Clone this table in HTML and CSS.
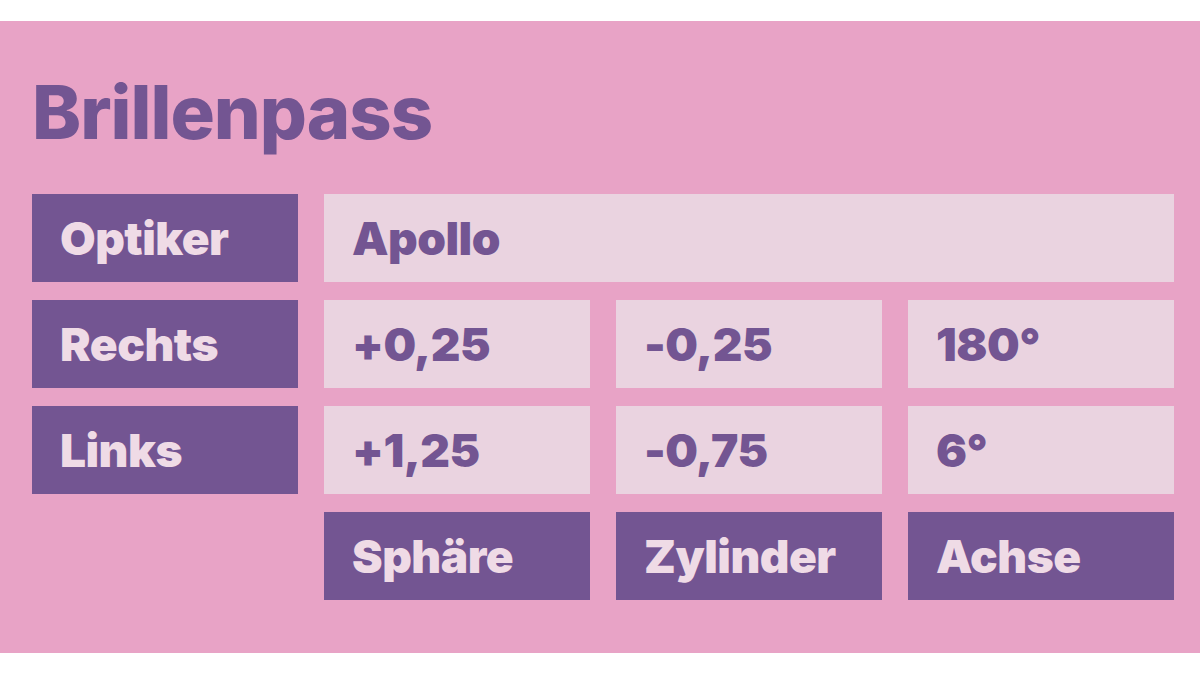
FILE: index.html
```html
<!DOCTYPE html>
<html lang="de">
<head>
<meta charset="utf-8">
<title>Brillenpass</title>
<link rel="stylesheet" href="styles.css">
</head>
<body>
<main class="panel">
  <h1 class="title">Brillenpass</h1>
  <div class="grid">
    <div class="cell label">Optiker</div>
    <div class="cell value wide">Apollo</div>

    <div class="cell label">Rechts</div>
    <div class="cell value">+0,25</div>
    <div class="cell value">-0,25</div>
    <div class="cell value">180°</div>

    <div class="cell label">Links</div>
    <div class="cell value">+1,25</div>
    <div class="cell value">-0,75</div>
    <div class="cell value">6°</div>

    <div class="cell empty"></div>
    <div class="cell label">Sphäre</div>
    <div class="cell label">Zylinder</div>
    <div class="cell label">Achse</div>
  </div>
</main>
</body>
</html>
```

FILE: styles.css
```css
html, body {
  margin: 0;
  padding: 0;
  background: #ffffff;
}

body {
  width: 1200px;
  height: 675px;
  overflow: hidden;
  font-family: "Inter", "Open Sans", "Liberation Sans", sans-serif;
}

.panel {
  margin-top: 21px;
  height: 632px;
  background: #e8a3c6;
  padding: 0 25px 0 32px;
  box-sizing: border-box;
  display: flex;
  flex-direction: column;
}

.title {
  margin: 0;
  padding-top: 54px;
  height: 173px;
  box-sizing: border-box;
  font-size: 74px;
  line-height: 74px;
  font-weight: 800;
  color: #735592;
  letter-spacing: -1px;
}

.grid {
  display: grid;
  grid-template-columns: repeat(4, 266px);
  grid-auto-rows: 88px;
  column-gap: 26px;
  row-gap: 18px;
}

.cell {
  display: flex;
  align-items: center;
  padding-left: 28px;
  font-size: 46px;
  font-weight: 900;
  letter-spacing: -0.5px;
}

.label {
  background: #735592;
  color: #efdbe6;
}

.value {
  background: #ead3e0;
  color: #735592;
}

.wide {
  grid-column: 2 / 5;
}

.empty {
  background: transparent;
}
```
